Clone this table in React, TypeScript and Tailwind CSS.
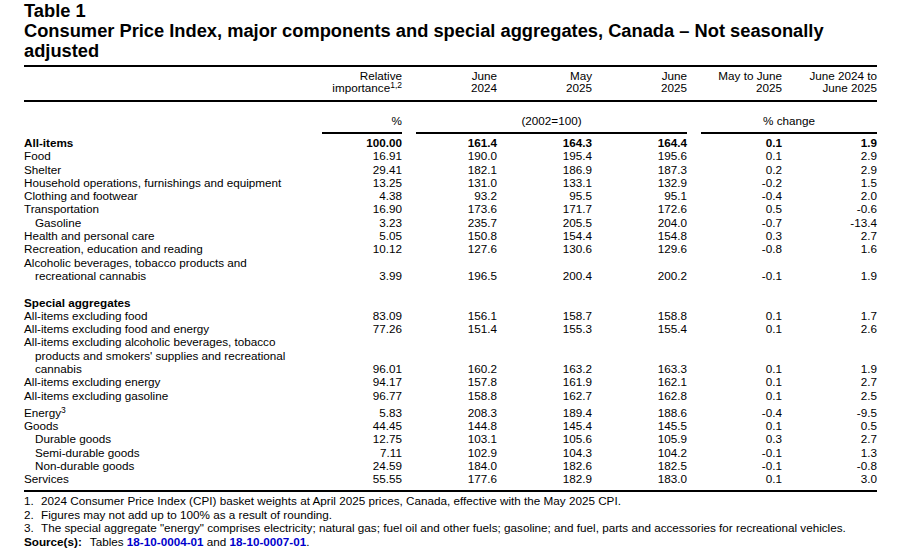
import React from "react";

type Row = {
  lines?: string[];
  indent?: boolean;
  bold?: boolean;
  v?: string[];
  sup?: string;
  blank?: boolean;
  extraTop?: boolean;
};

const rows: Row[] = [
  { lines: ["All-items"], bold: true, v: ["100.00", "161.4", "164.3", "164.4", "0.1", "1.9"] },
  { lines: ["Food"], v: ["16.91", "190.0", "195.4", "195.6", "0.1", "2.9"] },
  { lines: ["Shelter"], v: ["29.41", "182.1", "186.9", "187.3", "0.2", "2.9"] },
  { lines: ["Household operations, furnishings and equipment"], v: ["13.25", "131.0", "133.1", "132.9", "-0.2", "1.5"] },
  { lines: ["Clothing and footwear"], v: ["4.38", "93.2", "95.5", "95.1", "-0.4", "2.0"] },
  { lines: ["Transportation"], v: ["16.90", "173.6", "171.7", "172.6", "0.5", "-0.6"] },
  { lines: ["Gasoline"], indent: true, v: ["3.23", "235.7", "205.5", "204.0", "-0.7", "-13.4"] },
  { lines: ["Health and personal care"], v: ["5.05", "150.8", "154.4", "154.8", "0.3", "2.7"] },
  { lines: ["Recreation, education and reading"], v: ["10.12", "127.6", "130.6", "129.6", "-0.8", "1.6"] },
  { lines: ["Alcoholic beverages, tobacco products and", "recreational cannabis"], v: ["3.99", "196.5", "200.4", "200.2", "-0.1", "1.9"] },
  { blank: true },
  { lines: ["Special aggregates"], bold: true },
  { lines: ["All-items excluding food"], v: ["83.09", "156.1", "158.7", "158.8", "0.1", "1.7"] },
  { lines: ["All-items excluding food and energy"], v: ["77.26", "151.4", "155.3", "155.4", "0.1", "2.6"] },
  {
    lines: ["All-items excluding alcoholic beverages, tobacco", "products and smokers' supplies and recreational", "cannabis"],
    v: ["96.01", "160.2", "163.2", "163.3", "0.1", "1.9"],
  },
  { lines: ["All-items excluding energy"], v: ["94.17", "157.8", "161.9", "162.1", "0.1", "2.7"] },
  { lines: ["All-items excluding gasoline"], v: ["96.77", "158.8", "162.7", "162.8", "0.1", "2.5"] },
  { lines: ["Energy"], sup: "3", extraTop: true, v: ["5.83", "208.3", "189.4", "188.6", "-0.4", "-9.5"] },
  { lines: ["Goods"], v: ["44.45", "144.8", "145.4", "145.5", "0.1", "0.5"] },
  { lines: ["Durable goods"], indent: true, v: ["12.75", "103.1", "105.6", "105.9", "0.3", "2.7"] },
  { lines: ["Semi-durable goods"], indent: true, v: ["7.11", "102.9", "104.3", "104.2", "-0.1", "1.3"] },
  { lines: ["Non-durable goods"], indent: true, v: ["24.59", "184.0", "182.6", "182.5", "-0.1", "-0.8"] },
  { lines: ["Services"], v: ["55.55", "177.6", "182.9", "183.0", "0.1", "3.0"] },
];

const headers: string[][] = [
  ["Relative", "importance"],
  ["June", "2024"],
  ["May", "2025"],
  ["June", "2025"],
  ["May to June", "2025"],
  ["June 2024 to", "June 2025"],
];

function Sup({ children }: { children: React.ReactNode }) {
  return <span className="relative -top-[4px] text-[8.5px] leading-[0]">{children}</span>;
}

export default function App() {
  return (
    <div className="w-[905px] h-[558px] bg-white text-black pl-[24px] pt-[1px] font-['Liberation_Sans',Arial,sans-serif] overflow-hidden">
      <div className="text-[18.3px] font-bold leading-[20px]">
        <div>Table 1</div>
        <div>Consumer Price Index, major components and special aggregates, Canada – Not seasonally</div>
        <div>adjusted</div>
      </div>

      <div className="w-[853px] mt-[4px] text-[11.7px]">
        {/* header */}
        <div className="grid grid-cols-[283px_repeat(6,95px)] border-t-2 border-b-2 border-black pt-[3px] pb-[5px] leading-[12.3px]">
          <div />
          {headers.map((h, i) => (
            <div key={i} className="text-right">
              <div>{h[0]}</div>
              <div>
                {h[1]}
                {i === 0 && <Sup>1,2</Sup>}
              </div>
            </div>
          ))}
        </div>

        {/* units row */}
        <div className="grid grid-cols-[283px_repeat(6,95px)] pt-[12.5px] leading-[13px]">
          <div />
          <div className="pl-[15px]">
            <div className="text-right pb-[4.5px] border-b-2 border-black">%</div>
          </div>
          <div className="col-span-3 pl-[14px]">
            <div className="text-center pb-[4.5px] border-b-2 border-black">(2002=100)</div>
          </div>
          <div className="col-span-2 pl-[14px]">
            <div className="text-center pb-[4.5px] border-b-2 border-black">% change</div>
          </div>
        </div>

        {/* body */}
        <div className="pt-[2.4px] pb-[5px] border-b-2 border-black leading-[13.3px]">
          {rows.map((r, i) =>
            r.blank ? (
              <div key={i} className="h-[13.3px]" />
            ) : (
              <div
                key={i}
                className={`grid grid-cols-[283px_repeat(6,95px)] items-end ${r.bold ? "font-bold" : ""} ${r.extraTop ? "pt-[3.7px]" : ""}`}
              >
                <div className={r.indent ? "pl-[11px]" : ""}>
                  {r.lines!.map((l, j) => (
                    <div key={j} className={j > 0 ? "pl-[11px]" : ""}>
                      {l}
                      {r.sup && j === 0 && <Sup>{r.sup}</Sup>}
                    </div>
                  ))}
                </div>
                {(r.v ?? ["", "", "", "", "", ""]).map((v, k) => (
                  <div key={k} className="text-right">
                    {v}
                  </div>
                ))}
              </div>
            )
          )}
        </div>

        {/* footnotes */}
        <div className="pt-[1.5px] leading-[13.8px]">
          <div className="flex">
            <span className="w-[17px]">1.</span>
            <span>2024 Consumer Price Index (CPI) basket weights at April 2025 prices, Canada, effective with the May 2025 CPI.</span>
          </div>
          <div className="flex">
            <span className="w-[17px]">2.</span>
            <span>Figures may not add up to 100% as a result of rounding.</span>
          </div>
          <div className="flex">
            <span className="w-[17px]">3.</span>
            <span>
              The special aggregate "energy" comprises electricity; natural gas; fuel oil and other fuels; gasoline; and fuel, parts and accessories for recreational vehicles.
            </span>
          </div>
          <div className="flex">
            <span className="font-bold">Source(s):</span>
            <span className="ml-[8px]">
              Tables <span className="font-bold text-[#0000cc]">18-10-0004-01</span> and{" "}
              <span className="font-bold text-[#0000cc]">18-10-0007-01</span>.
            </span>
          </div>
        </div>
      </div>
    </div>
  );
}
